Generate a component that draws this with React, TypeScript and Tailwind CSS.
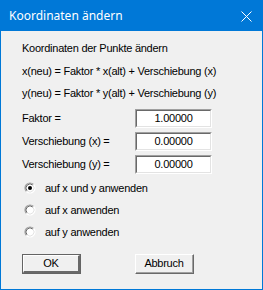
import React from "react";

const ui = { fontFamily: '"Liberation Sans", Arial, sans-serif' };

function Radio({ checked }: { checked?: boolean }) {
  return (
    <svg width="12" height="12" viewBox="0 0 12 12" className="shrink-0">
      <circle cx="6" cy="6" r="5" fill="#fff" />
      <path d="M2.46 9.54 A5 5 0 0 1 9.54 2.46" stroke="#a0a0a0" strokeWidth="1.2" fill="none" />
      <path d="M3.17 8.83 A4 4 0 0 1 8.83 3.17" stroke="#696969" strokeWidth="1" fill="none" />
      <path d="M9.54 2.46 A5 5 0 0 1 2.46 9.54" stroke="#ffffff" strokeWidth="1.2" fill="none" />
      <path d="M8.83 3.17 A4 4 0 0 1 3.17 8.83" stroke="#e3e3e3" strokeWidth="1" fill="none" />
      {checked && <circle cx="6" cy="6" r="2" fill="#000" />}
    </svg>
  );
}

function Field({ label, value }: { label: string; value: string }) {
  return (
    <div className="flex items-center h-[19px]">
      <span className="w-[113px] text-black">{label}</span>
      <div className="w-[77px] h-[19px] border-t border-l border-t-[#a0a0a0] border-l-[#a0a0a0] border-b border-r border-b-white border-r-white">
        <div className="h-full border-t border-l border-t-[#696969] border-l-[#696969] border-b border-r border-b-[#e3e3e3] border-r-[#e3e3e3] bg-white flex items-center justify-center text-black">
          {value}
        </div>
      </div>
    </div>
  );
}

export default function App() {
  const radios = ["auf x und y anwenden", "auf x anwenden", "auf y anwenden"];
  return (
    <div className="w-[263px] h-[290px] border border-[#0078d7] bg-[#f0f0f0] flex flex-col" style={ui}>
      {/* Title bar */}
      <div className="h-[30px] bg-[#0078d7] flex items-center justify-between pl-[8px] pr-[10px] shrink-0">
        <span className="text-white text-[12px]" style={{ fontFamily: '"Noto Sans", "Open Sans", sans-serif' }}>
          Koordinaten ändern
        </span>
        <svg width="11" height="11" viewBox="0 0 11 11">
          <path d="M0.5 0.5 L10.5 10.5 M10.5 0.5 L0.5 10.5" stroke="#fff" strokeWidth="1" />
        </svg>
      </div>

      {/* Body */}
      <div className="flex flex-col pl-[21px] pt-[6px] text-[11px] tracking-[-0.25px] text-black">
        <div className="h-[23px] leading-[22px]">Koordinaten der Punkte ändern</div>
        <div className="h-[22px] leading-[22px]">x(neu) = Faktor * x(alt) + Verschiebung (x)</div>
        <div className="h-[22px] leading-[22px]">y(neu) = Faktor * y(alt) + Verschiebung (y)</div>

        <div className="flex flex-col gap-[4px] mt-[5px]">
          <Field label="Faktor =" value="1.00000" />
          <Field label="Verschiebung (x) =" value="0.00000" />
          <Field label="Verschiebung (y) =" value="0.00000" />
        </div>

        <div className="flex flex-col mt-[3px]">
          {radios.map((r, i) => (
            <div key={r} className="h-[22px] flex items-center pl-[2px]">
              <Radio checked={i === 0} />
              <span className="ml-[9px]">{r}</span>
            </div>
          ))}
        </div>

        <div className="flex mt-[11px]">
          <div className="w-[59px] h-[20px] border border-[#646464]">
            <div className="h-full border-t border-l border-t-white border-l-white border-b-2 border-r-2 border-b-[#696969] border-r-[#696969] flex items-center justify-center">
              OK
            </div>
          </div>
          <div className="ml-[54px] w-[59px] h-[20px] border-t border-l border-t-white border-l-white border-b border-r border-b-[#696969] border-r-[#696969]">
            <div className="h-full border-b border-r border-b-[#a0a0a0] border-r-[#a0a0a0] flex items-center justify-center">
              Abbruch
            </div>
          </div>
        </div>
      </div>
    </div>
  );
}
